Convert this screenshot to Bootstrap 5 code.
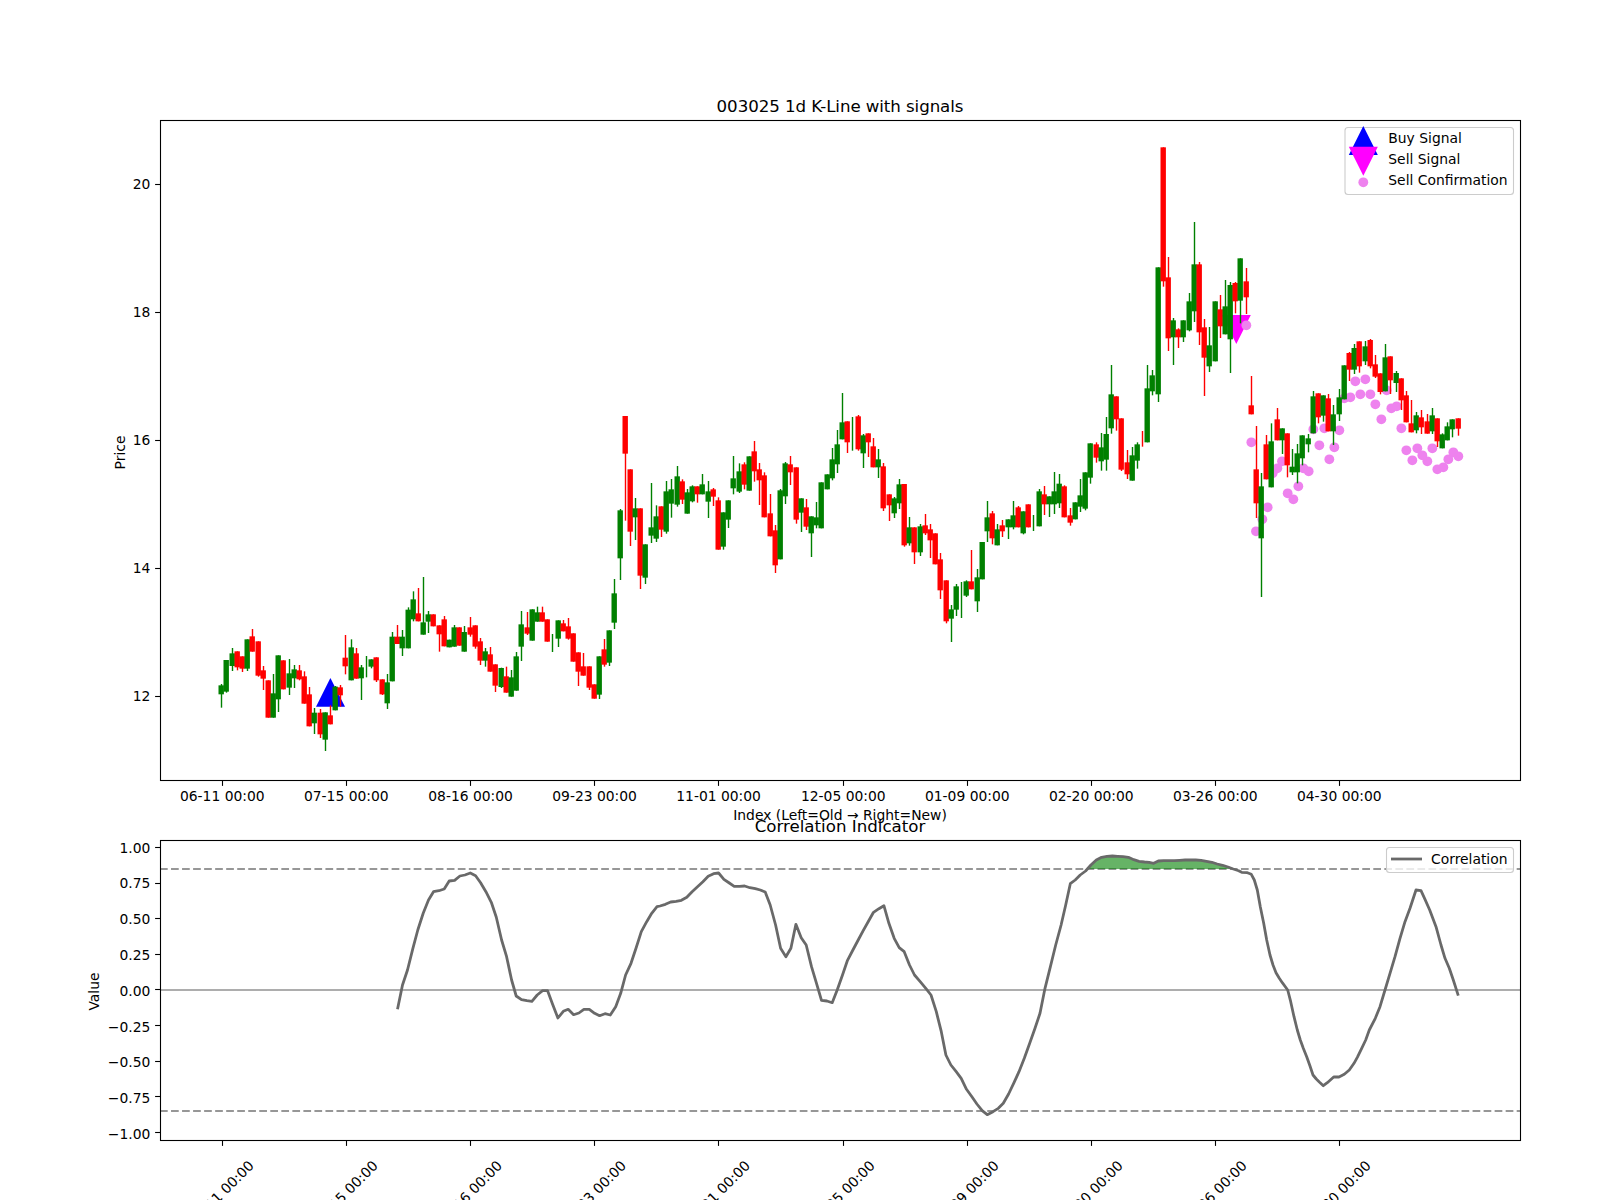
<!DOCTYPE html>
<html lang="en">
<head>
<meta charset="utf-8">
<title>003025 1d K-Line with signals</title>
<link href="https://cdn.jsdelivr.net/npm/bootstrap@5.3.0/dist/css/bootstrap.min.css" rel="stylesheet">
<style>
html,body{margin:0;background:#fff;overflow:hidden}
.chart-fig{width:1600px;height:1200px}
.chart-svg{display:block;width:1600px;height:1200px}
.chart-svg text{font-family:"DejaVu Sans",sans-serif;font-size:13.89px;fill:#000}
.chart-svg text.ttl{font-size:16.67px}
.chart-svg text.ttl-main{letter-spacing:-.08px}
.ctr{text-anchor:middle}
.rgt{text-anchor:end}
.tk line,.tk path{stroke:#000;stroke-width:1.1;fill:none}
.frame{fill:none;stroke:#000;stroke-width:1.1}
.leg{fill:#fff;fill-opacity:.8;stroke:#ccc;stroke-width:1.1}
</style>
</head>
<body>
<div class="container-fluid p-0 bg-white">
<figure class="chart-fig m-0">
<svg class="chart-svg" viewBox="0 0 1600 1200" xmlns="http://www.w3.org/2000/svg">
  <defs><clipPath id="above"><rect x="1000" y="840" width="400" height="28.9"/></clipPath></defs>

  <!-- upper panel -->
  <text class="ttl ttl-main ctr" x="840" y="112">003025 1d K-Line with signals</text>
  <polygon points="316,706.7 345,706.7 330.4,678" fill="#0000ff"/>
  <polygon points="1221.8,315 1250.8,315 1236.3,344" fill="#ff00ff"/>
  <g id="dots" fill="#ee82ee"></g>
  <g id="candles"></g>
  <rect class="frame" x="160.5" y="120.5" width="1360" height="660"/>
  <g class="tk" id="ticksA"></g>
  <text class="rgt" x="150.3" y="189">20</text>
  <text class="rgt" x="150.3" y="317">18</text>
  <text class="rgt" x="150.3" y="445">16</text>
  <text class="rgt" x="150.3" y="573">14</text>
  <text class="rgt" x="150.3" y="701">12</text>
  <text class="ctr" transform="translate(124.5,452.5) rotate(-90)">Price</text>
  <text class="ctr" x="222.3" y="801">06-11 00:00</text>
  <text class="ctr" x="346.3" y="801">07-15 00:00</text>
  <text class="ctr" x="470.6" y="801">08-16 00:00</text>
  <text class="ctr" x="594.6" y="801">09-23 00:00</text>
  <text class="ctr" x="718.6" y="801">11-01 00:00</text>
  <text class="ctr" x="843.3" y="801">12-05 00:00</text>
  <text class="ctr" x="967.3" y="801">01-09 00:00</text>
  <text class="ctr" x="1091.3" y="801">02-20 00:00</text>
  <text class="ctr" x="1215.3" y="801">03-26 00:00</text>
  <text class="ctr" x="1339.3" y="801">04-30 00:00</text>
  <text class="ctr" x="840" y="820">Index (Left=Old → Right=New)</text>

  <!-- legend, upper -->
  <rect class="leg" x="1345" y="127.5" width="168.5" height="67" rx="3"/>
  <polygon points="1348.8,155 1377.8,155 1363.3,126" fill="#0000ff"/>
  <polygon points="1348.8,146.7 1377.8,146.7 1363.3,175.7" fill="#ff00ff"/>
  <circle cx="1363.3" cy="182.3" r="4.9" fill="#ee82ee"/>
  <text x="1388.3" y="142.5">Buy Signal</text>
  <text x="1388.3" y="163.5">Sell Signal</text>
  <text x="1388.3" y="184.5">Sell Confirmation</text>

  <!-- lower panel -->
  <text class="ttl ctr" x="840" y="832">Correlation Indicator</text>
  <line x1="160" x2="1520" y1="869" y2="869" stroke="#979797" stroke-width="2.08" stroke-dasharray="7.7 3.33"/>
  <line x1="160" x2="1520" y1="1111" y2="1111" stroke="#979797" stroke-width="2.08" stroke-dasharray="7.7 3.33"/>
  <line x1="160" x2="1520" y1="990" y2="990" stroke="#adadad" stroke-width="2.08"/>
  <polygon id="corrFill" fill="#008000" fill-opacity=".6" clip-path="url(#above)"/>
  <polyline id="corr" fill="none" stroke="#696969" stroke-width="2.78" stroke-linejoin="round"/>
  <rect class="frame" x="160.5" y="840.5" width="1360" height="300"/>
  <g class="tk" id="ticksB"></g>
  <text class="rgt" x="150.3" y="852.5">1.00</text>
  <text class="rgt" x="150.3" y="888">0.75</text>
  <text class="rgt" x="150.3" y="924">0.50</text>
  <text class="rgt" x="150.3" y="959.5">0.25</text>
  <text class="rgt" x="150.3" y="996">0.00</text>
  <text class="rgt" x="150.3" y="1031.5">−0.25</text>
  <text class="rgt" x="150.3" y="1067">−0.50</text>
  <text class="rgt" x="150.3" y="1103">−0.75</text>
  <text class="rgt" x="150.3" y="1138.5">−1.00</text>
  <text class="ctr" transform="translate(98.5,991.5) rotate(-90)">Value</text>
  <text class="ctr" transform="translate(221.3,1193) rotate(-45)" y="5">06-11 00:00</text>
  <text class="ctr" transform="translate(345.3,1193) rotate(-45)" y="5">07-15 00:00</text>
  <text class="ctr" transform="translate(469.6,1193) rotate(-45)" y="5">08-16 00:00</text>
  <text class="ctr" transform="translate(593.6,1193) rotate(-45)" y="5">09-23 00:00</text>
  <text class="ctr" transform="translate(717.6,1193) rotate(-45)" y="5">11-01 00:00</text>
  <text class="ctr" transform="translate(842.3,1193) rotate(-45)" y="5">12-05 00:00</text>
  <text class="ctr" transform="translate(966.3,1193) rotate(-45)" y="5">01-09 00:00</text>
  <text class="ctr" transform="translate(1090.3,1193) rotate(-45)" y="5">02-20 00:00</text>
  <text class="ctr" transform="translate(1214.3,1193) rotate(-45)" y="5">03-26 00:00</text>
  <text class="ctr" transform="translate(1338.3,1193) rotate(-45)" y="5">04-30 00:00</text>

  <!-- legend, lower -->
  <rect class="leg" x="1386.5" y="847.5" width="127" height="25" rx="3"/>
  <line x1="1391" x2="1422" y1="859" y2="859" stroke="#696969" stroke-width="2.78"/>
  <text x="1431" y="863.5">Correlation</text>
</svg>
</figure>
</div>
<script>
(function(){
var NS='http://www.w3.org/2000/svg';
function el(parent,tag,attrs){var e=document.createElementNS(NS,tag);for(var k in attrs)e.setAttribute(k,attrs[k]);parent.appendChild(e);return e;}
var segs=[
[560,"g372,376,403,443 g300,300,395,398 g264,280,318,333 r274,274,322,331 r289,289,326,336 g238,238,326,333 r207,229,275,275 r244,244,347,350 r318,331,356,390 r361,361,473,473 g342,400,473,473 g286,286,418,456 r301,301,388,388 g297,340,383,405 g315,328,355,384 r315,331,358,361 r334,349,431,431 r381,403,499,499 g444,458,490,522 r447,458,523,534 g457,457,539,573 r436,466,493,493 g378,380,451,451 r375,382,406,440 r225,293,319,343 g238,262,361,361 r264,280,356,356 g315,322,355,420 g288,320,320,352 g298,298,320,325 r292,292,361,366 r358,358,403,405 g342,367,430,447 g216,230,364,364 r195,230,252,252 g210,230,265,288 g142,149,265,265 g94,118,178,184 r84,160,184,184 g51,187,224,224 g153,163,185,219 r163,163,199,199 r196,196,223,275 r168,178,259,259 g239,239,262,262"],
[400,"g675,682,740,740 r682,682,737,737 g678,696,755,755 r651,682,704,710 r676,676,740,746 r714,724,782,795 g744,754,782,800 r741,763,815,815 r793,793,857,876 g803,804,861,864 r800,829,878,878 g810,832,890,890 g756,769,872,872 g633,673,740,783 r636,682,701,705 g628,628,722,722 g620,637,665,665 r620,637,665,665 r658,658,725,725 g702,730,730,756 g661,661,716,741 r660,670,694,694 r654,679,716,719 r700,700,785,785 r757,757,815,858 r759,799,827,827 r799,799,863,870 r853,853,896,896 g769,769,884,897 r717,748,794,800 g691,691,788,798 g537,580,668,687 g327,331,475,540 r48,48,161,362 r208,208,395,438 g294,325,352,420 r325,325,527,567 g433,433,533,552 g249,382,407,429 g316,349,416,426 r319,319,389,411 g243,274,395,401 g237,268,311,353 g198,229,314,320 r238,244,299,312 g267,277,341,341 g256,259,304,307 r259,259,283,308 g222,253,283,283 g243,274,305,354 r264,268,290,318 r292,301,449,449 g337,337,440,449 g301,301,359,384 g168,235,265,283 g190,214,275,279 r187,193,254,268 g169,169,272,272"],
[370,"r213,244,304,335 r279,298,331,405 r307,316,442,442 r372,430,499,499 r465,481,586,609 g357,361,568,568 g276,280,379,402 r258,283,307,345 r292,292,449,461 g385,385,428,486 r387,412,470,480 g439,439,490,561 g396,442,466,475 g337,337,475,475 g313,313,358,358 g234,268,325,331 g180,223,283,309 g69,157,208,208 r154,154,217,249 g141,190,190,242 r135,139,238,242 g192,196,250,294 r190,190,217,261 r204,229,292,292 g237,268,292,324 r279,289,415,423 r373,373,406,453 g381,385,430,444 g327,343,400,417 r342,342,526,530 g441,472,520,527 r472,472,547,582 g462,469,547,558 r432,466,490,495 r462,478,511,564 r490,490,583,583 r549,568,661,687 r631,631,754,760 g705,718,746,816 g642,649,719,738 g636,690,690,744 g631,634,677,681 r540,634,658,658 g597,622,694,726 g516,516,628,628 g393,442,484,516 r423,430,505,523 g462,478,526,526 r450,466,484,501 g448,448,472,507 g393,436,472,478 r408,412,472,472 g424,424,490,493 r403,403,472,472 g435,460,460,483 g357,364,469,469 r348,373,403,435 g379,379,403,441"],
[130,"g1026,1084,1123,1152 g1032,1061,1120,1134 r1066,1069,1162,1162 r1134,1156,1178,1187 g1117,1117,1168,1168 g1047,1096,1130,1146 g1027,1027,1136,1141 g940,940,1043,1061 r937,943,983,998 g909,952,994,1022 g861,912,989,1022 g705,793,895,911 r799,799,868,902 r865,865,1019,1023 r960,997,1033,1047 g951,976,1052,1052 g937,943,992,1016 r903,925,925,950 g705,775,937,937 g720,736,784,796 g412,412,793,816 r52,52,454,470 r381,442,625,663 g564,571,622,705 r595,598,622,654 g571,571,622,636 g489,514,601,604 g276,403,544,576 r396,403,607,645 r567,592,683,798 g591,646,709,726 g514,514,694,694 r495,538,589,624 g450,529,613,613 g456,465,628,729 r456,459,514,550 g385,385,512,580 r414,454,502,552 r738,826,853,853 r888,1018,1120,1164 g1029,1069,1225,1401 r915,943,1048,1048 g880,934,1072,1072 r834,868,931,931 g895,895,931,972 r910,910,1006,1042"],
[320,"g387,440,457,465 g372,400,457,490 g346,346,415,436 g342,355,373,397 g213,229,340,340 r220,220,292,310 g226,226,287,305 r222,235,334,334 g255,283,334,375 g207,232,283,303 g136,136,238,238 r96,99,149,183 g72,84,149,162 r64,64,139,158 g63,79,124,135 r57,60,139,145 r105,133,170,174 r160,160,216,223 g72,112,214,214 r109,109,181,222 g153,159,189,216 r175,175,241,270 r213,226,307,307 r240,310,337,337 g276,286,331,340 r270,292,322,342 r282,304,341,341 g264,286,334,342 r295,295,364,381 g340,343,385,385 g307,319,361,361 g298,298,328,352 r295,295,326,347"]
];
var cg=document.getElementById('candles'),i=0;
segs.forEach(function(s){
  var oy=s[0];
  s[1].split(' ').forEach(function(t){
    var col=t[0]==='r'?'#ff0000':'#008000',v=t.slice(1).split(',').map(function(n){return oy+n/3;});
    var xc=Math.round(221.8+5.173*i-0.5)+0.5;
    el(cg,'rect',{x:xc-0.7,y:v[0],width:1.4,height:v[3]-v[0],fill:col});
    if(v[2]>v[1]) el(cg,'rect',{x:xc-3,y:v[1],width:5.4,height:v[2]-v[1],fill:col});
    i++;
  });
});
var dots=[[79,16],[94,367],[108,634],[127,598],[143,562],[172,445],[158,460],[186,424],[203,520],[220,538],[235,499],[250,445],[266,454],[280,328],[298,376],[313,325],[328,418],[343,382],[358,331],[373,235],[391,232],[406,184],[421,223],[436,178],[451,223],[466,253],[484,298],[500,211],[514,265],[530,259],[544,325],[559,391],[577,421],[592,385],[607,406],[622,424],[637,385],[652,448],[670,442],[685,418],[700,397],[715,409]];
var dg=document.getElementById('dots');
dots.forEach(function(d){el(dg,'circle',{cx:1220+d[0]/3,cy:320+d[1]/3,r:4.9});});
var A=document.getElementById('ticksA'),B=document.getElementById('ticksB');
[222.5,346.5,470.5,594.5,718.5,843.5,967.5,1091.5,1215.5,1339.5].forEach(function(x){
  el(A,'line',{x1:x,x2:x,y1:781,y2:785.9});el(B,'line',{x1:x,x2:x,y1:1141,y2:1145.9});});
[184.3,312.3,440.3,568.3,696.3].forEach(function(y){var yy=Math.round(y-.5)+.5;el(A,'line',{x1:155.1,x2:160,y1:yy,y2:yy});});
for(var q=0;q<9;q++){var yy=Math.round(847.5+35.62*q-.5)+.5;el(B,'line',{x1:155.1,x2:160,y1:yy,y2:yy});}
var z7=[882,688,895,615,908,570,922,505,935,450,949,400,963,360,976,335,990,332,1004,327,1017,303,1031,301,1045,288,1058,285,1072,279,1086,287,1099,308,1113,335,1127,367,1140,412,1154,480,1167,530,1180,600,1192,648,1206,659,1220,662,1233,664,1247,645,1261,632,1274,632,1287,672,1301,714,1315,694,1328,688,1342,704,1356,699,1369,688,1383,688,1397,700,1410,707,1424,701,1438,705,1452,680,1465,640,1478,585,1492,550,1505,505,1519,455,1533,425,1546,400,1560,380];
var z8=[0,378,14,373,28,366,42,364,56,361,70,352,84,335,98,320,112,305,126,289,140,281,153,279,167,298,181,309,194,319,208,319,221,318,235,323,249,326,262,330,275,336,288,375,302,435,315,505,329,530,342,505,355,433,369,473,382,495,396,560,409,610,422,661,436,663,450,668,463,630,477,585,490,541,504,510,518,480,531,452,545,423,558,397,572,386,585,377,598,430,612,475,625,503,638,515,652,555,665,585,680,605,695,626,708,645,722,695,735,755,747,825,760,855,774,875,787,895,801,928,815,950,828,972,842,992,855,1004,870,995,884,985,897,970,911,942,925,908,938,875,952,835,966,790,980,745,993,700,1006,625,1020,560,1034,495,1048,435,1060,375,1072,311,1085,300,1098,285,1112,273,1126,255,1140,240,1154,232,1168,229,1182,228,1196,229,1210,230,1224,232,1238,239,1252,244,1266,246,1278,247,1290,250,1302,243,1316,242,1330,242,1344,242,1358,241,1372,240,1386,240,1400,240,1414,241,1428,244,1442,247,1456,252,1470,256,1484,261,1498,267,1512,272,1520,277,1535,278,1545,283];
var z9=[463,150,472,180,481,230,491,280,500,330,510,375,519,405,528,428,538,445,547,458,563,480,572,515,582,560,592,600,601,630,610,655,620,680,630,708,639,735,649,747,658,756,670,767,682,758,701,741,717,741,733,733,748,720,762,700,772,682,785,655,797,630,808,600,826,565,840,530,855,480,870,430,885,380,900,325,915,275,930,235,948,180,963,182,975,208,989,240,1008,290,1023,345,1035,385,1048,415,1060,450,1075,497];
var pts=[],j;
for(j=0;j<z7.length;j+=2)pts.push([60+z7[j]/2.613,780+z7[j+1]/3]);
for(j=0;j<z8.length;j+=2)pts.push([660+z8[j]/2.613,780+z8[j+1]/3]);
for(j=0;j<z9.length;j+=2)pts.push([1100+z9[j]/3,830+z9[j+1]/3]);
var str=function(a){return a.map(function(p){return p[0].toFixed(1)+','+p[1].toFixed(1);}).join(' ');};
document.getElementById('corr').setAttribute('points',str(pts));
document.getElementById('corrFill').setAttribute('points',str(pts.filter(function(p){return p[0]>1050&&p[0]<1250;})));
})();
</script>
<script src="https://cdn.jsdelivr.net/npm/bootstrap@5.3.0/dist/js/bootstrap.bundle.min.js"></script>
</body>
</html>
